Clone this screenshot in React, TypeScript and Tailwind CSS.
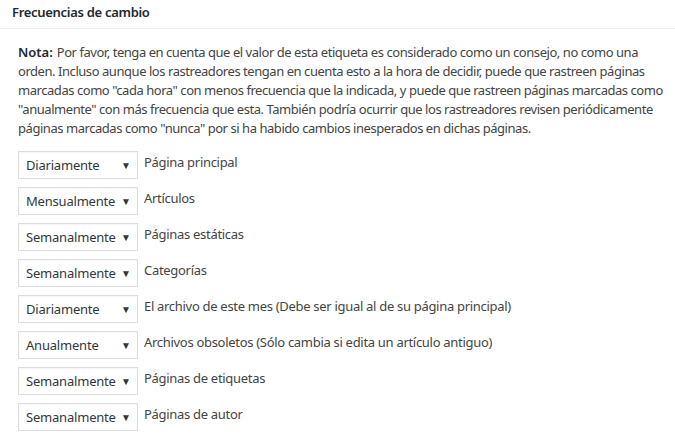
const rows: { value: string; label: string }[] = [
  { value: "Diariamente", label: "Página principal" },
  { value: "Mensualmente", label: "Artículos" },
  { value: "Semanalmente", label: "Páginas estáticas" },
  { value: "Semanalmente", label: "Categorías" },
  { value: "Diariamente", label: "El archivo de este mes (Debe ser igual al de su página principal)" },
  { value: "Anualmente", label: "Archivos obsoletos (Sólo cambia si edita un artículo antiguo)" },
  { value: "Semanalmente", label: "Páginas de etiquetas" },
  { value: "Semanalmente", label: "Páginas de autor" },
];

function FakeSelect({ value }: { value: string }) {
  return (
    <div className="flex h-[28px] w-[120px] shrink-0 items-center justify-between border border-[#dddddd] bg-white pl-[7px] pr-[6px] text-[13px] text-[#32373c] shadow-[inset_0_1px_2px_rgba(0,0,0,0.04)]">
      <span className="pt-[2px] tracking-[-0.2px]">{value}</span>
      <span className="text-[10px] leading-none text-[#32373c]">▼</span>
    </div>
  );
}

export default function App() {
  return (
    <div className="min-h-screen w-[675px] bg-white font-['Noto_Sans',sans-serif] text-[13px] text-[#444444]">
      <div className="border-b border-[#eeeeee] px-[12px] pb-[7px] pt-[3px]">
        <h2 className="text-[13px] font-semibold leading-[18px] tracking-[-0.3px] text-[#23282d]">Frecuencias de cambio</h2>
      </div>
      <div className="pl-[18px] pr-[4px] pt-[14px]">
        <p className="text-[13px] leading-[19px] tracking-[-0.45px]">
          <strong className="mr-[1px] font-semibold tracking-normal text-[#23282d]">Nota:</strong> Por favor, tenga en cuenta que el valor de esta etiqueta es considerado como un consejo, no como una orden. Incluso aunque los rastreadores tengan en cuenta esto a la hora de decidir, puede que rastreen páginas marcadas como "cada hora" con menos frecuencia que la indicada, y puede que rastreen páginas marcadas como "anualmente" con más frecuencia que esta. También podría ocurrir que los rastreadores revisen periódicamente páginas marcadas como "nunca" por si ha habido cambios inesperados en dichas páginas.
        </p>
        <ul className="mt-[13px] flex flex-col gap-[8px]">
          {rows.map((r, i) => (
            <li key={i} className="flex items-start gap-[6px]">
              <FakeSelect value={r.value} />
              <span className="pt-[2px] leading-[18px] tracking-[-0.3px]">{r.label}</span>
            </li>
          ))}
        </ul>
      </div>
    </div>
  );
}
